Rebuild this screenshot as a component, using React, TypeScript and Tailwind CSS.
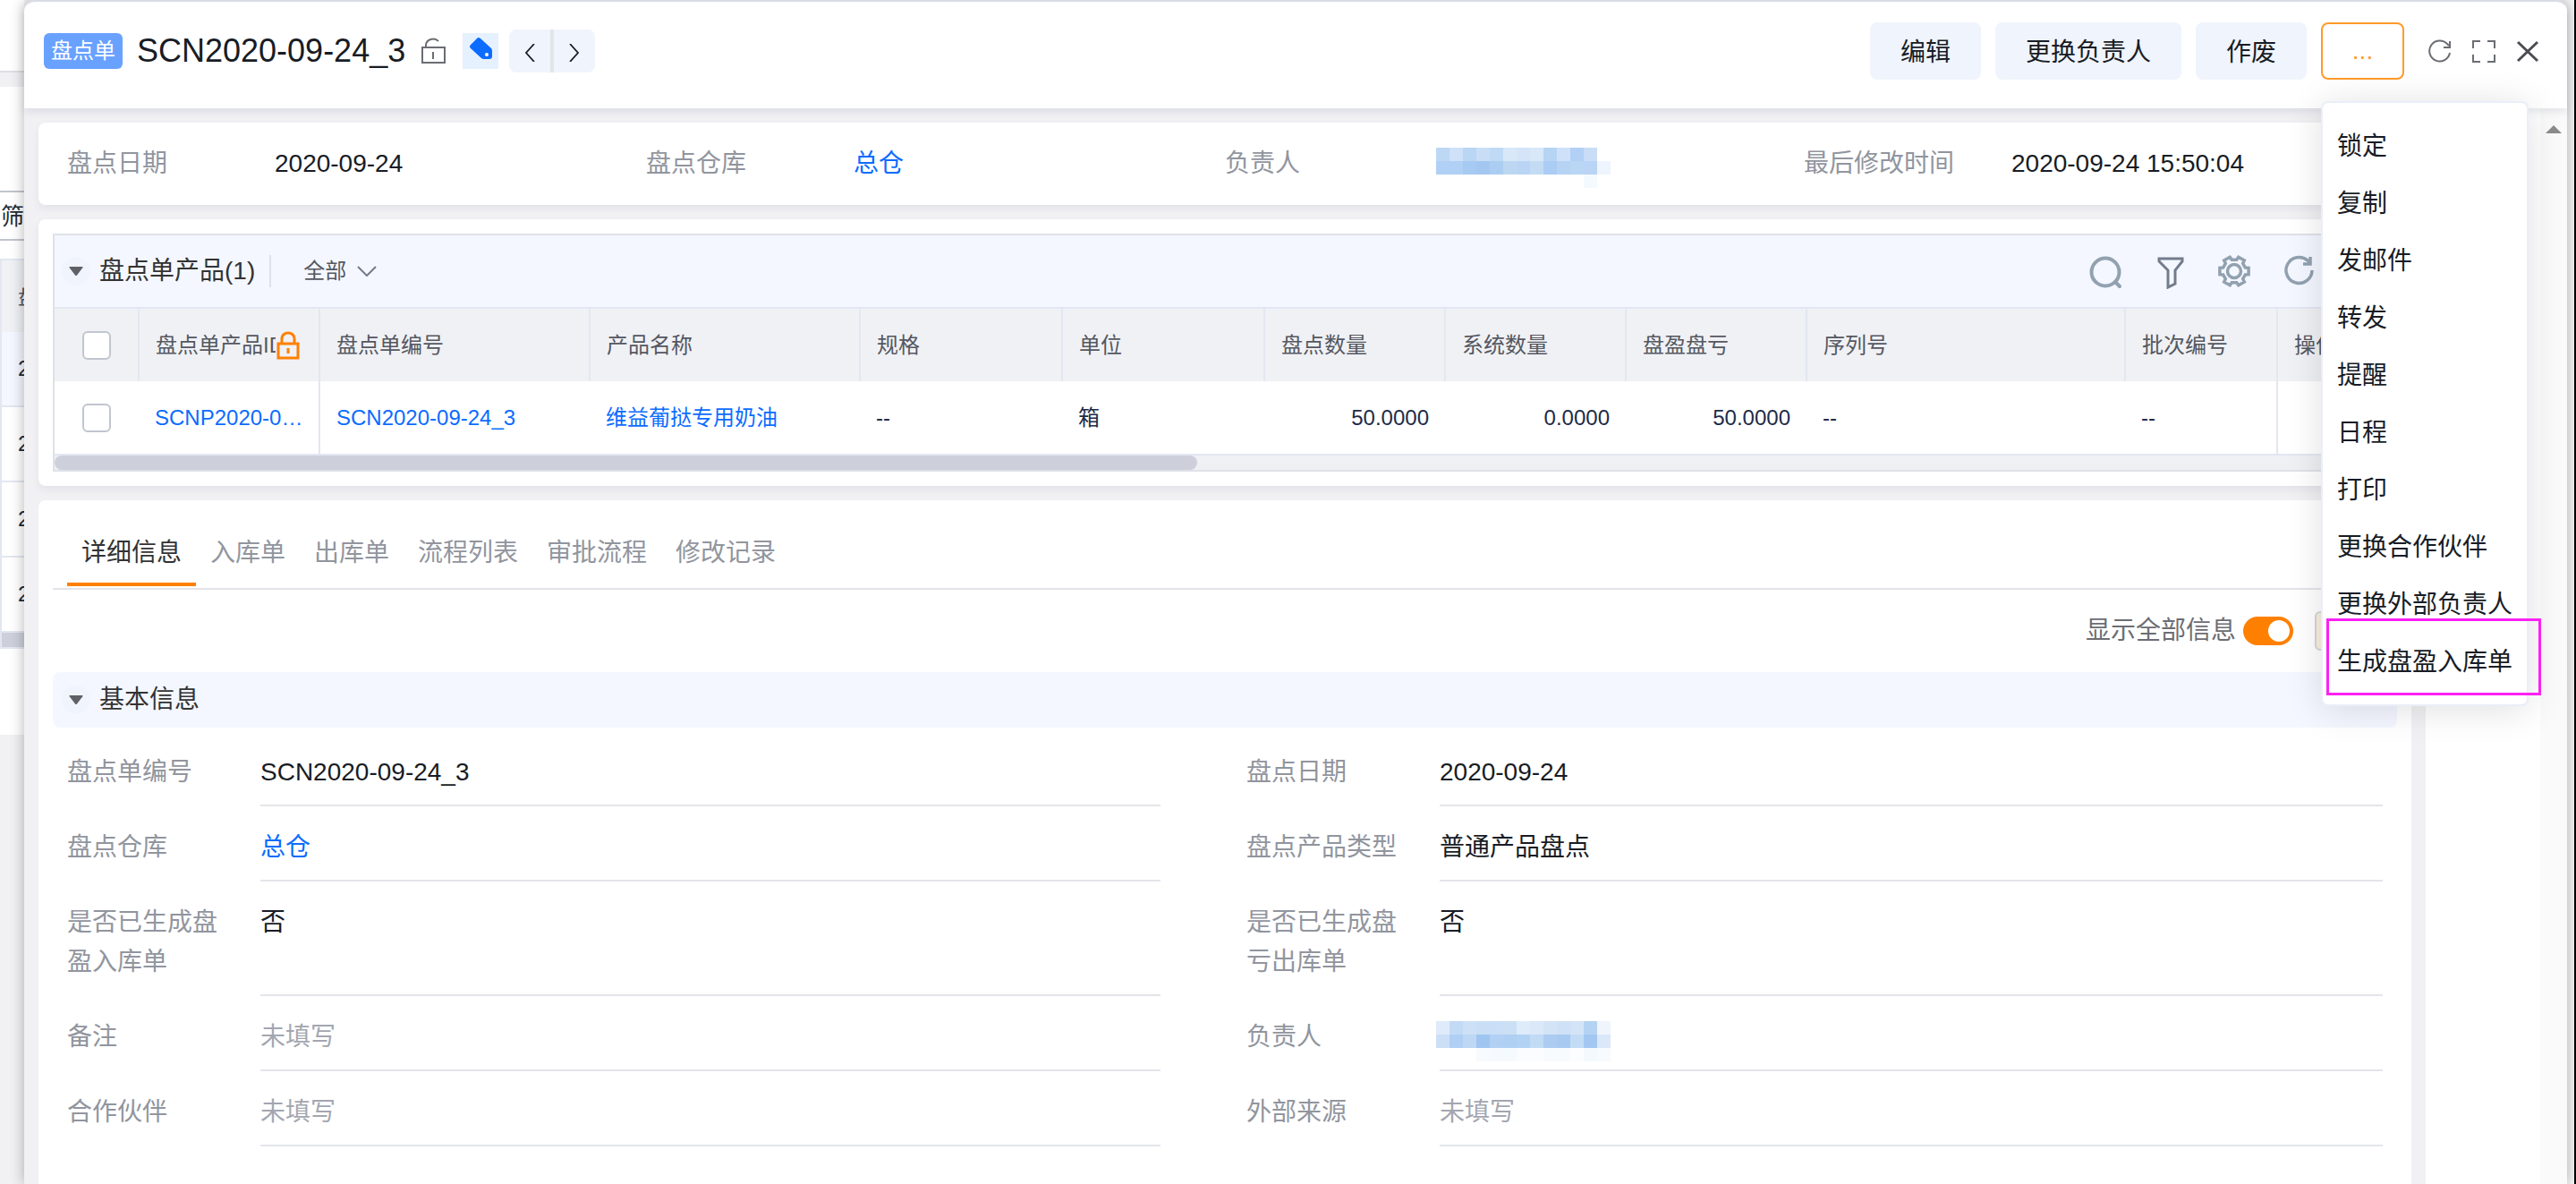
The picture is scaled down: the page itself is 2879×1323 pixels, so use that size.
import { type ReactNode } from 'react';

const menuItems = ['锁定', '复制', '发邮件', '转发', '提醒', '日程', '打印', '更换合作伙伴', '更换外部负责人', '生成盘盈入库单'];
const tabs = ['详细信息', '入库单', '出库单', '流程列表', '审批流程', '修改记录'];

const ownerTop = [
  ['#bdd8f5', '#cfe1f8', '#b9d6f4', '#c9def6', '#c0daf6', '#d8e8f8', '#d5e4f8', '#d8e8f8', '#b6d4f3', '#cfe1f9', '#b2d0f6', '#c9ddf7'],
  ['#b1d0f5', '#b1d0f5', '#a7caf2', '#a4c7f1', '#accdf2', '#bdd7f3', '#b9d4f5', '#c3dcf4', '#abccf3', '#b6d3f4', '#b9d6f4', '#b9d4f5', '#eff5fe'],
  ['', '', '', '', '', '', '', '', '', '', '', '#f4fafe'],
];
const ownerBottom = [
  ['#dfebfb', '#c3daf5', '#cde0f6', '#cadff6', '#cadef7', '#cbe0f5', '#deecfa', '#dae8f9', '#d3e4f7', '#cfe1f6', '#d4e4f7', '#b4d3f3', '#f0f5fc'],
  ['#cbdff7', '#b0cff4', '#bdd7f4', '#9fc6f0', '#b1d0f4', '#afcff3', '#b2d2f3', '#c2dbf5', '#accbf1', '#a8caf1', '#c3dcf5', '#a2c7f1', '#dbe8fa'],
  ['', '', '', '#f8fbfe', '#f6fafe', '#f5fafe', '#fafcff', '#fafcff', '#f8fbfe', '#f8fbfe', '#fcfdff', '#f3f9fd', '#f7fbfe'],
];

interface Column {
  title: string;
  width?: number;
  value?: string;
  link?: boolean;
  numeric?: boolean;
  fixed?: boolean;
}
const columns: Column[] = [
  { title: '盘点单产品ID', width: 202, value: 'SCNP2020-0…', link: true, fixed: true },
  { title: '盘点单编号', width: 302, value: 'SCN2020-09-24_3', link: true },
  { title: '产品名称', width: 302, value: '维益葡挞专用奶油', link: true },
  { title: '规格', width: 226, value: '--' },
  { title: '单位', width: 226, value: '箱' },
  { title: '盘点数量', width: 202, value: '50.0000', numeric: true },
  { title: '系统数量', width: 202, value: '0.0000', numeric: true },
  { title: '盘盈盘亏', width: 202, value: '50.0000', numeric: true },
  { title: '序列号', width: 356, value: '--' },
  { title: '批次编号', width: 170, value: '--', fixed: true },
  { title: '操作' },
];

function Mosaic({ rows }: { rows: string[][] }) {
  return (
    <svg className="w-[195px] h-11 overflow-visible shrink-0" viewBox="0 -4 195 44" shapeRendering="crispEdges" role="img" aria-label="负责人">
      {rows.map((row, y) =>
        row.map((color, x) => color && <rect key={`${x}-${y}`} x={x * 15} y={y * 15} width="15" height="15" fill={color} />)
      )}
    </svg>
  );
}

function Caret() {
  return (
    <span className="w-8 h-8 rounded-full bg-[#f0f4fc] flex items-center justify-center">
      <svg className="w-4 h-2.5" viewBox="0 0 16 10" fill="#5f6166">
        <path d="M1 0h14q1 0 .5 1L9 9.4q-1 1-2 0L.5 1Q0 0 1 0z" />
      </svg>
    </span>
  );
}

function BackgroundPage() {
  return (
    <div className="w-[27px] shrink-0 overflow-hidden whitespace-nowrap bg-[#f1f1f4] text-[#212b36]" aria-hidden="true">
      <div className="h-[81px] bg-white border-b-2 border-[#dedfe4]" />
      <div className="h-4" />
      <div className="h-[724px] bg-white pt-[116px]">
        <div className="h-14 border-y-2 border-[#c1c5ce] pl-px text-[26px] leading-[54px]">筛</div>
        <div className="mt-5 border-2 border-r-0 border-[#e2e7f1] text-2xl">
          <div className="h-20 pl-[18px] leading-[82px] bg-[#f0f1f5] text-[#545861]">盘</div>
          <div className="h-[84px] pl-[18px] leading-[82px] border-b-2 border-[#e2e7f1] bg-[#f4f7ff]">2</div>
          <div className="h-[84px] pl-[18px] leading-[82px] border-b-2 border-[#e2e7f1]">2</div>
          <div className="h-[84px] pl-[18px] leading-[82px] border-b-2 border-[#e2e7f1]">2</div>
          <div className="h-[84px] pl-[18px] leading-[82px] border-b-2 border-[#e2e7f1]">2</div>
          <div className="h-4 bg-[#cdd0da]" />
        </div>
      </div>
    </div>
  );
}

function MoreMenu() {
  return (
    <div className="relative">
      <button className="w-[93px] h-16 rounded-lg border-2 border-[#ff9b29] text-[#ff9b29] text-[28px]">...</button>
      <ul className="absolute left-0 top-full mt-6 w-[232px] py-4 z-20 bg-white rounded-lg border-2 border-[#eaeef8] shadow-[0_4px_40px_rgba(0,0,0,0.13)]">
        {menuItems.map((item, i) => (
          <li key={item} className="relative">
            <button className="block w-full h-16 pt-0.5 pl-4 text-left text-[28px] whitespace-nowrap text-[#181c25]">{item}</button>
            {i === menuItems.length - 1 && (
              <span className="absolute left-1 -right-4 -top-4 -bottom-1.5 border-3 border-[#fb20f3] pointer-events-none" />
            )}
          </li>
        ))}
      </ul>
    </div>
  );
}

function Header() {
  return (
    <header className="relative z-10 h-[121px] shrink-0 flex items-start pl-[22px] pr-[30px] bg-white rounded-t-xl border-t-2 border-[#d9dce6] shadow-[0_4px_10px_rgba(30,40,80,0.1)]">
      <div className="flex items-center h-12 mt-[31px]">
        <span className="w-[88px] h-10 rounded-md bg-[#69a1ff] text-white text-2xl leading-10 text-center">盘点单</span>
        <h1 className="ml-4 text-4xl text-[#181c25]">SCN2020-09-24_3</h1>
        <button className="ml-4 w-8 h-8" aria-label="锁定状态">
          <svg viewBox="0 0 32 32" fill="none" stroke="#6b6d73" strokeWidth="2">
            <path d="M3 12h25v17H3zM7 12V9a8 7 0 0 1 14-4M15 17v8" />
          </svg>
        </button>
        <button className="ml-4 w-10 h-10 bg-[#e6f1ff]" aria-label="标签">
          <svg viewBox="0 0 40 40">
            <path d="M16 6q2-2 4 0L31 16q2 1 2 4v6q0 3-3 3h-6q-2 0-3-1L9 17q-2-2 0-4z" fill="#0c6cff" />
            <circle cx="27" cy="24" r="2" fill="#fff" />
          </svg>
        </button>
        <div className="ml-3 h-12 flex rounded-lg bg-[#f0f4fc] overflow-hidden">
          <button className="w-[46px] pt-1 flex items-center justify-center" aria-label="上一条">
            <svg className="w-3 h-5" viewBox="0 0 12 20" fill="none" stroke="#181c25" strokeWidth="1.8"><path d="M11 0L2 10l9 10" /></svg>
          </button>
          <span className="w-1 bg-[#e2e5ea]" />
          <button className="w-[46px] pt-1 flex items-center justify-center" aria-label="下一条">
            <svg className="w-3 h-5" viewBox="0 0 12 20" fill="none" stroke="#181c25" strokeWidth="1.8"><path d="M1 0l9 10-9 10" /></svg>
          </button>
        </div>
      </div>
      <div className="ml-auto mt-[23px] flex items-center gap-4 text-[28px] text-[#181c25]">
        <button className="h-16 px-[34px] pt-1 rounded-lg bg-[#f0f4fc]">编辑</button>
        <button className="h-16 px-[34px] pt-1 rounded-lg bg-[#f0f4fc]">更换负责人</button>
        <button className="h-16 px-[34px] pt-1 rounded-lg bg-[#f0f4fc]">作废</button>
        <MoreMenu />
        <div className="ml-2.5 flex items-center gap-[21px] text-[#6b6d73]">
          <button aria-label="刷新">
            <svg className="w-7 h-7" viewBox="0 0 28 28" fill="none" stroke="currentColor" strokeWidth="2">
              <path d="M25 16A11.500 11.500 0 1 1 22 6l2 2" />
              <path d="M25 3v7h-7" />
            </svg>
          </button>
          <button aria-label="全屏">
            <svg className="w-7 h-7" viewBox="0 0 28 28" fill="none" stroke="currentColor" strokeWidth="2">
              <path d="M2 11V3h8M18 3h8v8M26 18v8h-8M10 26H2v-8" />
            </svg>
          </button>
          <button aria-label="关闭">
            <svg className="w-7 h-7" viewBox="0 0 28 28" fill="none" stroke="#4b4d53" strokeWidth="3"><path d="M3 4l22 21M25 4L3 25" /></svg>
          </button>
        </div>
      </div>
    </header>
  );
}

function SummaryItem({ label, children }: { label: string; children: ReactNode }) {
  return (
    <div className="flex items-center">
      <dt className="w-[232px] shrink-0 text-[#91959e]">{label}</dt>
      <dd>{children}</dd>
    </div>
  );
}

function Summary() {
  return (
    <dl className="h-[92px] px-8 grid grid-cols-4 bg-white rounded-lg shadow-[0_4px_8px_rgba(30,40,80,0.07)] text-[28px] text-[#181c25] whitespace-nowrap">
      <SummaryItem label="盘点日期">2020-09-24</SummaryItem>
      <SummaryItem label="盘点仓库"><a href="#" className="text-[#0c6cff]">总仓</a></SummaryItem>
      <SummaryItem label="负责人"><div className="ml-1"><Mosaic rows={ownerTop} /></div></SummaryItem>
      <SummaryItem label="最后修改时间">2020-09-24 15:50:04</SummaryItem>
    </dl>
  );
}

function Checkbox({ label }: { label: string }) {
  return <input type="checkbox" aria-label={label} className="block mx-auto w-8 h-8 appearance-none rounded-md border-2 border-[#c1c5ce] bg-white" />;
}

function Toolbar() {
  return (
    <div className="h-20 pl-2 flex items-center bg-[#f4f7ff]">
      <button className="flex items-center text-[28px] text-[#333]"><Caret /><span className="ml-2.5">盘点单产品(1)</span></button>
      <span className="ml-4 w-0.5 h-9 bg-[#dee1e8]" />
      <button className="ml-9 flex items-center gap-3 text-2xl text-[#545861]">
        全部
        <svg className="w-[22px] h-3" viewBox="0 0 22 12" fill="none" stroke="#737c8c" strokeWidth="2"><path d="M1 1l10 10L21 1" /></svg>
      </button>
      <div className="ml-auto pr-4 flex items-center gap-8 text-[#91a1b0]">
        <button aria-label="搜索">
          <svg className="w-10 h-10" viewBox="0 0 40 40" fill="none" stroke="currentColor" strokeWidth="4" strokeLinecap="round">
            <circle cx="20" cy="21" r="15.5" /><path d="M31 32l5 5" />
          </svg>
        </button>
        <button aria-label="筛选">
          <svg className="w-10 h-10" viewBox="0 0 40 40" fill="none" stroke="#737c8c" strokeWidth="3">
            <path d="M8 6h26v3l-8 10v15l-8 4V19L8 9z" />
          </svg>
        </button>
        <button aria-label="设置">
          <svg className="w-10 h-10" viewBox="0 0 40 40" fill="none" stroke="currentColor" strokeWidth="3.5">
            <path d="M36.1 16.3v7.4L32.4 24l-2.7 4.700 1.600 3.400-6.500 3.700-2.100-3.100h-5.400l-2.100 3.100-6.500-3.700 1.600-3.400L7.600 24l-3.700-.3v-7.400l3.700-.3 2.700-4.700-1.600-3.400 6.500-3.700 2.100 3.100h5.400l2.100-3.100 6.500 3.700-1.600 3.400 2.700 4.700z" />
            <circle cx="20" cy="20" r="7.5" />
          </svg>
        </button>
        <button aria-label="刷新列表">
          <svg className="w-10 h-10" viewBox="0 0 40 40" fill="none" stroke="currentColor" strokeWidth="3.5">
            <path d="M35 19A14.500 14.500 0 1 1 30 8l2 2" />
            <path d="M33 4v8h-8" />
          </svg>
        </button>
        <span className="w-10" />
      </div>
    </div>
  );
}

function Products() {
  return (
    <section className="p-4 bg-white rounded-lg shadow-[0_4px_8px_rgba(30,40,80,0.07)]">
      <div className="border-2 border-[#dee1e8]">
        <Toolbar />
        <table className="w-full table-fixed border-collapse text-2xl whitespace-nowrap text-left">
          <colgroup>
            <col className="w-[94px]" />
            {columns.map((c) => <col key={c.title} style={{ width: c.width }} />)}
          </colgroup>
          <thead>
            <tr className="h-[82px] bg-[#f0f1f5] text-[#545861] border-t-2 border-[#e2e7f1]">
              <th className="border-r-2 border-[#e2e7f1]"><Checkbox label="全选" /></th>
              {columns.map((c, i) => (
                <th key={c.title} className="pl-[18px] pr-4 font-normal border-r-2 last:border-r-0 border-[#e2e7f1]">
                  {i === 0 ? (
                    <div className="flex items-center">
                      <span className="w-[134px] overflow-hidden">{c.title}</span>
                      <svg className="w-7 h-8 shrink-0" viewBox="0 0 28 32" fill="none" stroke="#ff8000" strokeWidth="3">
                        <path d="M3 14h22v16H3zM7 14V8a7 6 0 0 1 14 0v6M14 19v6" />
                      </svg>
                    </div>
                  ) : c.title}
                </th>
              ))}
            </tr>
          </thead>
          <tbody>
            <tr className="h-[82px] text-[#212b47] border-b-2 border-[#e2e7f1]">
              <td><Checkbox label="选择 SCN2020-09-24_3" /></td>
              {columns.map((c) => (
                <td key={c.title} className={`pl-[18px] pr-[18px] ${c.numeric ? 'text-right' : ''} ${c.fixed ? 'border-r-2 border-[#e2e7f1]' : ''}`}>
                  {c.link ? <a href="#" className="text-[#0c6cff]">{c.value}</a> : c.value}
                </td>
              ))}
            </tr>
          </tbody>
        </table>
        <div className="h-4 bg-[#eff0f4]">
          <div className="w-[48.8%] h-4 rounded-lg bg-[#cdd0da]" />
        </div>
      </div>
    </section>
  );
}

function Field({ label, right, children }: { label: string; right?: boolean; children: ReactNode }) {
  return (
    <div className={`flex pl-4 ${right ? 'pr-8' : 'pr-20'}`}>
      <dt className="w-[168px] mr-12 shrink-0 pt-6 pb-4 text-[#91959e]">{label}</dt>
      <dd className="flex-1 pt-6 pb-3.5 border-b-2 border-[#e4e5ea]">{children}</dd>
    </div>
  );
}

function Details() {
  const link = <a href="#" className="text-[#0c6cff]">总仓</a>;
  const empty = <span className="text-[#a3a6b0]">未填写</span>;
  return (
    <section className="flex-1 bg-white rounded-t-lg">
      <div role="tablist" className="ml-4 h-[100px] pl-4 flex items-end border-b-2 border-[#e4e5ea] text-[28px]">
        {tabs.map((tab, i) => (
          <button
            key={tab}
            role="tab"
            aria-selected={i === 0}
            className={`mb-0.5 h-[78px] px-4 pt-2 border-b-4 ${i === 0 ? 'border-[#ff8000] text-[#333]' : 'border-transparent text-[#91959e]'}`}
          >
            {tab}
          </button>
        ))}
      </div>
      <div className="h-[92px] pr-8 flex items-center justify-end text-[28px] text-[#6b6d73]">
        <label className="flex items-center gap-2">
          显示全部信息
          <input type="checkbox" role="switch" defaultChecked className="appearance-none w-14 h-8 rounded-full bg-[#ff8000] flex items-center justify-end pr-1 before:w-6 before:h-6 before:rounded-full before:bg-white" />
        </label>
        <button aria-label="切换布局" className="ml-6 w-[76px] h-11 rounded-md border-2 border-[#d3d5da] bg-[#fbf0df]" />
      </div>
      <button className="w-[calc(100%-32px)] mx-4 h-[62px] mb-1 pl-2.5 flex items-center rounded-lg bg-[#f4f7ff] text-[28px] text-[#333]">
        <Caret /><span className="ml-2.5">基本信息</span>
      </button>
      <dl className="ml-4 pb-10 grid grid-cols-2 text-[28px] leading-11 text-[#181c25]">
        <Field label="盘点单编号">SCN2020-09-24_3</Field>
        <Field label="盘点日期" right>2020-09-24</Field>
        <Field label="盘点仓库">{link}</Field>
        <Field label="盘点产品类型" right>普通产品盘点</Field>
        <Field label="是否已生成盘盈入库单">否</Field>
        <Field label="是否已生成盘亏出库单" right>否</Field>
        <Field label="备注">{empty}</Field>
        <Field label="负责人" right><div className="-ml-1 flex"><Mosaic rows={ownerBottom} /></div></Field>
        <Field label="合作伙伴">{empty}</Field>
        <Field label="外部来源" right>{empty}</Field>
      </dl>
    </section>
  );
}

export default function App() {
  return (
    <div className="flex min-h-screen overflow-hidden bg-[#f5f5f7] font-['Liberation_Sans','Noto_Sans_CJK_SC',sans-serif]">
      <BackgroundPage />
      <div className="relative flex-1 min-w-0 flex flex-col rounded-t-xl bg-[#f1f1f4] shadow-[0_0_16px_rgba(0,0,0,0.3)]">
        <Header />
        <div className="flex-1 flex">
          <main className="flex-1 min-w-0 flex flex-col gap-4 pt-4 px-4">
            <Summary />
            <Products />
            <Details />
          </main>
          <aside className="w-32 bg-white" />
          <div className="w-[30px] pt-[19px] bg-[#fafafa]">
            <svg className="mx-auto w-[18px] h-[9px]" viewBox="0 0 18 9" fill="#8b8b8b"><path d="M9 0l9 9H0z" /></svg>
          </div>
        </div>
      </div>
      <div className="w-2.5 border-r-2 border-black" />
    </div>
  );
}
